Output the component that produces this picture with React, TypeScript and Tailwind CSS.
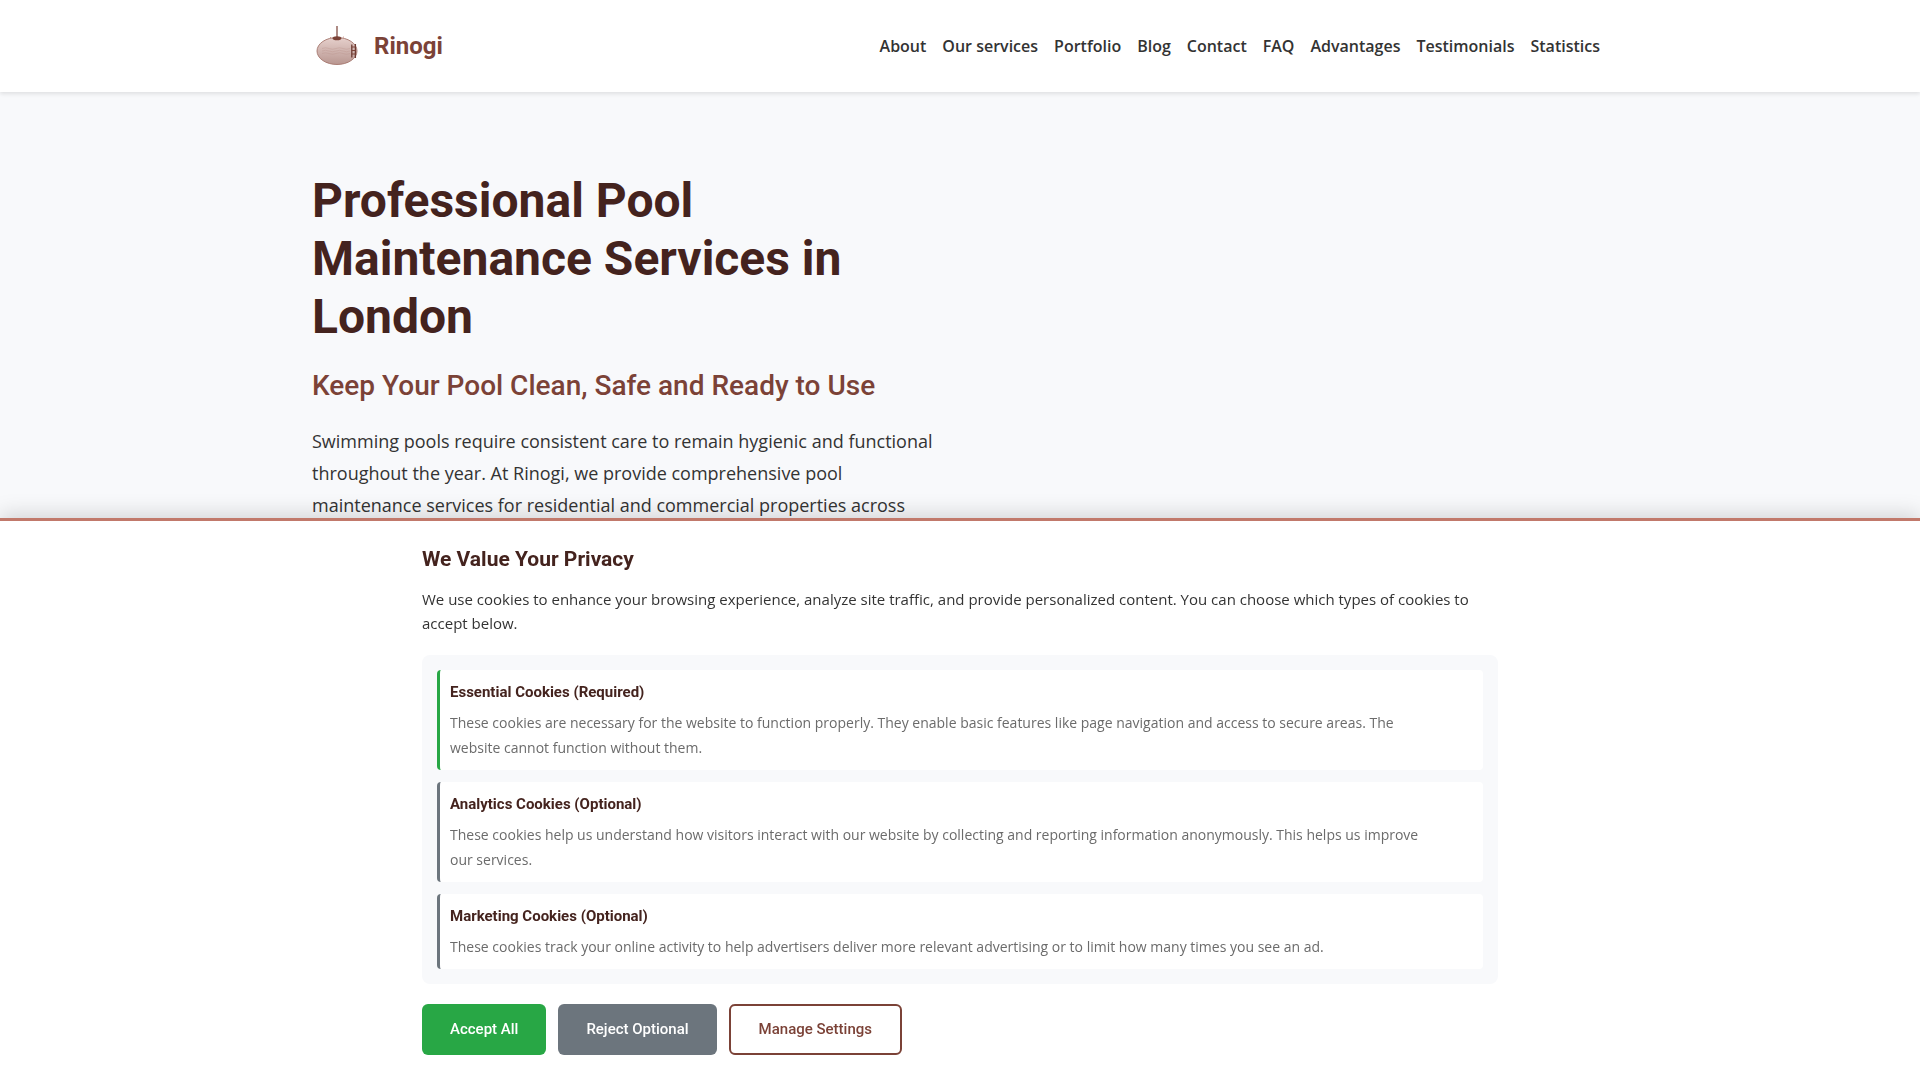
import { useState } from 'react'

type CookieInfo = {
  id: string
  title: string
  text: string
  required: boolean
}

const navLinks = [
  { label: 'About', href: '#about' },
  { label: 'Our services', href: '#services' },
  { label: 'Portfolio', href: '#portfolio' },
  { label: 'Blog', href: '#blog' },
  { label: 'Contact', href: '#contact' },
  { label: 'FAQ', href: '#faq' },
  { label: 'Advantages', href: '#advantages' },
  { label: 'Testimonials', href: '#testimonials' },
  { label: 'Statistics', href: '#statistics' },
]

const cookieTypes: CookieInfo[] = [
  {
    id: 'essential',
    title: 'Essential Cookies (Required)',
    text: 'These cookies are necessary for the website to function properly. They enable basic features like page navigation and access to secure areas. The website cannot function without them.',
    required: true,
  },
  {
    id: 'analytics',
    title: 'Analytics Cookies (Optional)',
    text: 'These cookies help us understand how visitors interact with our website by collecting and reporting information anonymously. This helps us improve our services.',
    required: false,
  },
  {
    id: 'marketing',
    title: 'Marketing Cookies (Optional)',
    text: 'These cookies track your online activity to help advertisers deliver more relevant advertising or to limit how many times you see an ad.',
    required: false,
  },
]

function Logo() {
  return (
    <svg viewBox="0 0 50 50" className="w-[50px] h-[50px]" aria-hidden="true">
      <defs>
        <linearGradient id="pool" x1="0" y1="0" x2="0" y2="1">
          <stop offset="0" stopColor="#e6d0cc" />
          <stop offset="1" stopColor="#b99791" />
        </linearGradient>
      </defs>
      <ellipse cx="25" cy="30" rx="20" ry="13.5" fill="url(#pool)" stroke="#a5766d" strokeWidth="0.9" />
      {/* Water lines */}
      <g fill="none" stroke="#b98f88" strokeWidth="0.6" opacity="0.5">
        <path d="M10 27.5q3.5-1.5 7 0t7 0 7 0 7 0" />
        <path d="M10 30q3.5-1.5 7 0t7 0 7 0 7 0" />
        <path d="M10 32.5q3.5-1.5 7 0t7 0 7 0 7 0" />
      </g>
      {/* Skimmer */}
      <path d="M25 5v12" stroke="#9a6f67" strokeWidth="1.6" />
      <ellipse cx="25" cy="17.3" rx="4.3" ry="2" fill="#7b4237" />
      <circle cx="18.5" cy="16.5" r="0.5" fill="#c1796b" />
      <circle cx="31.5" cy="16" r="0.5" fill="#c1796b" />
      {/* Ladder */}
      <path d="M39.8 23.5v13M43.4 23v14" stroke="#6b3b33" strokeWidth="1.3" />
      <path d="M39.8 26h4M39.8 29.5h4M39.8 33h4" stroke="#7b4237" strokeWidth="1.1" />
    </svg>
  )
}

function CookieBanner({ onClose }: { onClose: () => void }) {
  return (
    <section
      aria-labelledby="cookie-title"
      className="fixed inset-x-0 bottom-0 z-50 bg-white border-t-[3px] border-[#c1796b] shadow-[0_-4px_20px_rgba(0,0,0,0.15)] py-[25px]"
    >
      <div className="max-w-[1100px] mx-auto px-3">
        <h2 id="cookie-title" className="font-[Roboto,sans-serif] font-bold text-[21px] leading-[26px] text-[#44231e] mb-[15px]">
          We Value Your Privacy
        </h2>
        <p className="text-[15px] leading-6 mb-5">
          We use cookies to enhance your browsing experience, analyze site traffic, and provide personalized content. You can choose which types of cookies to accept below.
        </p>

        <div className="bg-[#f8f9fb] rounded-lg p-[15px] mb-5 flex flex-col gap-3">
          {cookieTypes.map((cookie) => (
            <div
              key={cookie.id}
              className={`bg-white rounded border-l-[3px] p-[10px] pr-[50px] ${cookie.required ? 'border-[#28a745]' : 'border-[#6c757d]'}`}
            >
              <h3 className="font-[Roboto,sans-serif] font-bold text-[15px] leading-[25px] text-[#44231e] mb-[5px]">{cookie.title}</h3>
              <p className="text-sm leading-[25px] text-[#6b6b6b]">{cookie.text}</p>
            </div>
          ))}
        </div>

        <div className="flex flex-wrap gap-3 font-[Roboto,sans-serif] font-medium text-[15px] leading-[27px]">
          <button onClick={onClose} className="bg-[#28a745] text-white rounded-md px-7 py-3">
            Accept All
          </button>
          <button onClick={onClose} className="bg-[#6c757d] text-white rounded-md px-7 py-3">
            Reject Optional
          </button>
          <button className="bg-white text-[#7b4237] border-2 border-[#7b4237] rounded-md px-7 py-[10px]">
            Manage Settings
          </button>
        </div>
      </div>
    </section>
  )
}

export default function App() {
  const [showBanner, setShowBanner] = useState(true)

  return (
    <div className="min-h-screen flex flex-col bg-[#f8f9fb] font-['Open_Sans',sans-serif] text-[#333333]">
      <header className="relative bg-white shadow-[0_2px_4px_rgba(0,0,0,0.1)]">
        <div className="max-w-[1320px] mx-auto px-3 py-[21px] flex items-center justify-between">
          <a href="#" className="flex items-center gap-3">
            <Logo />
            <span className="font-[Roboto,sans-serif] font-bold text-2xl text-[#7b4237]">Rinogi</span>
          </a>
          <nav className="flex">
            {navLinks.map((link) => (
              <a key={link.href} href={link.href} className="px-2 font-semibold text-base hover:text-[#7b4237]">
                {link.label}
              </a>
            ))}
          </nav>
        </div>
      </header>

      <main className="flex-1 py-20">
        <div className="max-w-[1320px] mx-auto px-3 grid grid-cols-2 gap-6">
          <div>
            <h1 className="font-[Roboto,sans-serif] font-bold text-5xl leading-[58px] text-[#44231e] mb-6">
              Professional Pool Maintenance Services in London
            </h1>
            <h2 className="font-[Roboto,sans-serif] font-medium text-[28px] leading-8 text-[#7b4237] mb-[23px]">
              Keep Your Pool Clean, Safe and Ready to Use
            </h2>
            <p className="text-lg leading-8">
              Swimming pools require consistent care to remain hygienic and functional throughout the year. At Rinogi, we provide comprehensive pool maintenance services for residential and commercial properties across London.
            </p>
          </div>
        </div>
      </main>

      {showBanner && <CookieBanner onClose={() => setShowBanner(false)} />}
    </div>
  )
}
